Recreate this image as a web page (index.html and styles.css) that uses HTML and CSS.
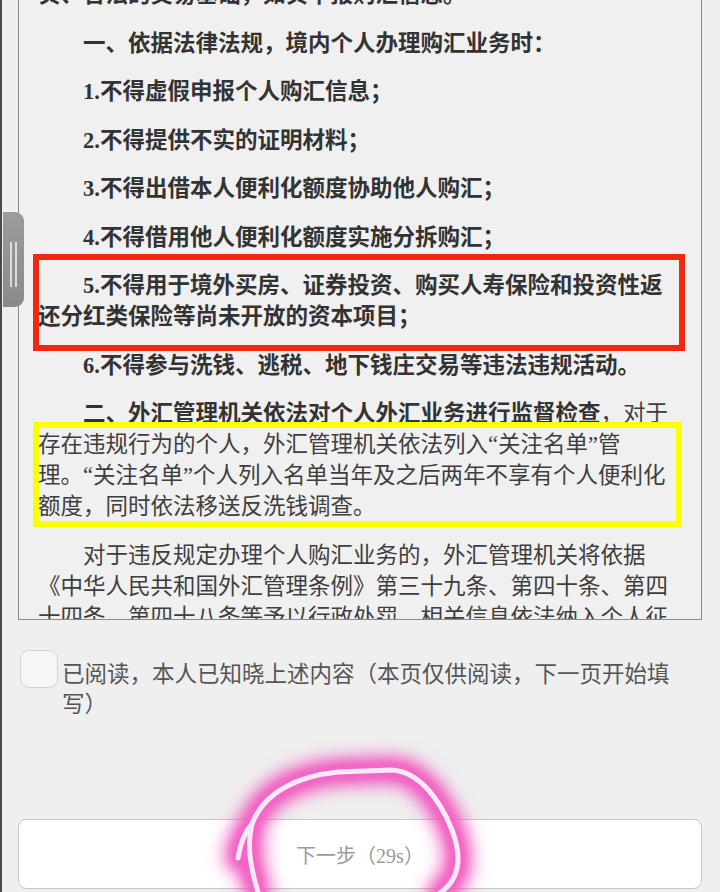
FILE: index.html
```html
<!DOCTYPE html>
<html lang="zh-CN">
<head>
<meta charset="utf-8">
<title>购汇须知</title>
<link rel="stylesheet" href="styles.css">
</head>
<body>
<div class="page">
  <div class="doc">
    <div class="doc-inner">
      <p class="b">实、合法的交易基础，如实申报购汇信息。</p>
      <p class="b ind">一、依据法律法规，境内个人办理购汇业务时：</p>
      <p class="b ind">1.不得虚假申报个人购汇信息；</p>
      <p class="b ind">2.不得提供不实的证明材料；</p>
      <p class="b ind">3.不得出借本人便利化额度协助他人购汇；</p>
      <p class="b ind">4.不得借用他人便利化额度实施分拆购汇；</p>
      <p class="b ind">5.不得用于境外买房、证券投资、购买人寿保险和投资性返<br>还分红类保险等尚未开放的资本项目；</p>
      <p class="b ind">6.不得参与洗钱、逃税、地下钱庄交易等违法违规活动。</p>
      <p class="ind"><span class="b">二、外汇管理机关依法对个人外汇业务进行监督检查</span>，对于<br>存在违规行为的个人，外汇管理机关依法列入“关注名单”管<br>理。“关注名单”个人列入名单当年及之后两年不享有个人便利化<br>额度，同时依法移送反洗钱调查。</p>
      <p class="ind">对于违反规定办理个人购汇业务的，外汇管理机关将依据<br>《中华人民共和国外汇管理条例》第三十九条、第四十条、第四<br>十四条、第四十八条等予以行政处罚，相关信息依法纳入个人征</p>
    </div>
  </div>

  <label class="agree">
    <span class="box"></span>
    <span class="agree-text">已阅读，本人已知晓上述内容（本页仅供阅读，下一页开始填写）</span>
  </label>

  <div class="next">下一步（29s）</div>

  <div class="handle"><span></span><span></span></div>
  <div class="anno anno-red"></div>
  <div class="anno anno-yellow"></div>

  <svg class="scribble" width="720" height="892" viewBox="0 0 720 892">
    <defs>
      <filter id="glow" x="-50%" y="-50%" width="200%" height="200%">
        <feGaussianBlur stdDeviation="9"/>
      </filter>
      <filter id="glow2" x="-50%" y="-50%" width="200%" height="200%">
        <feGaussianBlur stdDeviation="4"/>
      </filter>
    </defs>
    <g fill="none" stroke-linecap="round" stroke-linejoin="round">
      <g stroke="#f04ab8" stroke-width="26" filter="url(#glow)">
        <path d="M258 892 C251 870 246 846 252 824 C264 792 298 776 338 772 L392 770 C420 772 440 800 452 830 C462 856 461 878 440 893"/>
        <path d="M238 858 C240 845 244 833 252 824"/>
      </g>
      <g stroke="#f268c8" stroke-width="12" filter="url(#glow2)">
        <path d="M258 892 C251 870 246 846 252 824 C264 792 298 776 338 772 L392 770 C420 772 440 800 452 830 C462 856 461 878 440 893"/>
        <path d="M238 858 C240 845 244 833 252 824"/>
      </g>
      <g stroke="#fde8f7" stroke-width="5">
        <path d="M258 892 C251 870 246 846 252 824 C264 792 298 776 338 772 L392 770 C420 772 440 800 452 830 C462 856 461 878 440 893"/>
        <path d="M238 858 C240 845 244 833 252 824"/>
      </g>
    </g>
  </svg>
</div>
</body>
</html>
```

FILE: styles.css
```css
html, body {
  margin: 0;
  padding: 0;
}

body {
  background: #efefef;
  font-family: "Noto Sans CJK SC", sans-serif;
}

.page {
  position: relative;
  width: 720px;
  height: 892px;
  box-sizing: border-box;
  padding: 0 18px;
  overflow: hidden;
  background: linear-gradient(to right, #4a4a4a 0, #4a4a4a 2px, #efefef 2px);
  display: flex;
  flex-direction: column;
}

.doc {
  height: 620px;
  flex: none;
  box-sizing: border-box;
  border: 1px solid #8a8a8a;
  border-top: 0;
  padding: 0 19px;
  overflow: hidden;
  background: #f0f0f0;
}

.doc-inner {
  margin-top: -21px;
}

.doc p {
  margin: 0 0 17.5px;
  font-family: "Liberation Serif", "Noto Sans CJK SC", serif;
  font-size: 22.5px;
  line-height: 31px;
  white-space: nowrap;
  color: #3e3e3e;
}

.doc .b {
  font-weight: 700;
  color: #333;
}

.doc .ind {
  text-indent: 45px;
}

.agree {
  display: flex;
  align-items: flex-start;
  gap: 4px;
  margin-top: 30px;
  padding-left: 2px;
}

.box {
  flex: none;
  width: 38px;
  height: 38px;
  box-sizing: border-box;
  border: 1px solid #d2d3dc;
  border-radius: 9px;
  background: #f6f6f8;
}

.agree-text {
  margin-top: 7px;
  font-size: 22.5px;
  line-height: 30px;
  color: #555;
}

.next {
  margin-top: 102px;
  height: 70px;
  flex: none;
  box-sizing: border-box;
  border: 1px solid #c6c6c6;
  border-radius: 8px;
  background: #fff;
  display: flex;
  align-items: center;
  justify-content: center;
  font-family: "Liberation Serif", "Noto Sans CJK SC", serif;
  font-size: 20px;
  color: #9a9a9a;
}

.handle {
  position: absolute;
  left: 3px;
  top: 212px;
  width: 21px;
  height: 95px;
  border-radius: 0 9px 9px 0;
  background: linear-gradient(to bottom, #9c9c9c, #8a8a8a);
}

.handle span {
  position: absolute;
  top: 30px;
  width: 2px;
  height: 45px;
  background: #dcdcdc;
}

.handle span:first-child {
  left: 7px;
}

.handle span:last-child {
  left: 12px;
}

.anno {
  position: absolute;
  box-sizing: border-box;
}

.anno-red {
  left: 33px;
  top: 254px;
  width: 652px;
  height: 97px;
  border: 6px solid #f5260f;
}

.anno-yellow {
  left: 33px;
  top: 422px;
  width: 649px;
  height: 105px;
  border: 6px solid #fcff00;
}

.scribble {
  position: absolute;
  left: 0;
  top: 0;
  pointer-events: none;
}
```
